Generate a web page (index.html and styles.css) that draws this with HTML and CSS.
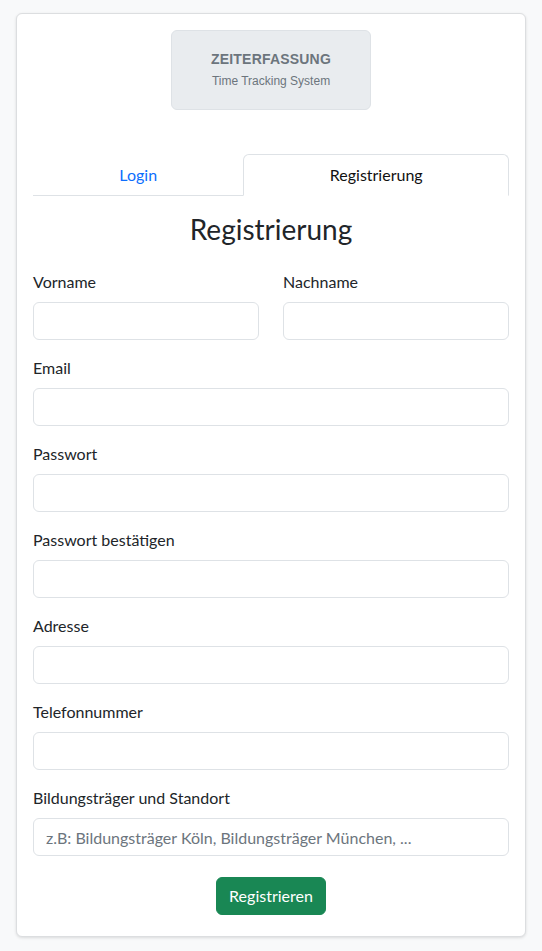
FILE: index.html
```html
<!DOCTYPE html>
<html lang="de">
<head>
<meta charset="utf-8">
<title>Zeiterfassung – Registrierung</title>
<link rel="stylesheet" href="styles.css">
</head>
<body>
<main class="page">
  <section class="card">
    <div class="logo">
      <div class="logo-title">ZEITERFASSUNG</div>
      <div class="logo-sub">Time Tracking System</div>
    </div>
    <nav class="tabs">
      <a class="tab" href="#">Login</a>
      <a class="tab active" href="#">Registrierung</a>
    </nav>
    <h3 class="heading">Registrierung</h3>
    <form class="form">
      <div class="row">
        <div class="group">
          <label class="label">Vorname</label>
          <input class="input" type="text">
        </div>
        <div class="group">
          <label class="label">Nachname</label>
          <input class="input" type="text">
        </div>
      </div>
      <div class="group">
        <label class="label">Email</label>
        <input class="input" type="email">
      </div>
      <div class="group">
        <label class="label">Passwort</label>
        <input class="input" type="password">
      </div>
      <div class="group">
        <label class="label">Passwort bestätigen</label>
        <input class="input" type="password">
      </div>
      <div class="group">
        <label class="label">Adresse</label>
        <input class="input" type="text">
      </div>
      <div class="group">
        <label class="label">Telefonnummer</label>
        <input class="input" type="text">
      </div>
      <div class="group">
        <label class="label">Bildungsträger und Standort</label>
        <input class="input" type="text" placeholder="z.B: Bildungsträger Köln, Bildungsträger München, ...">
      </div>
      <div class="actions">
        <button class="btn" type="button">Registrieren</button>
      </div>
    </form>
  </section>
</main>
</body>
</html>
```
FILE: styles.css
```css
* { box-sizing: border-box; }
html, body {
  margin: 0;
  background: #f8f9fa;
  font-family: Lato, "Noto Sans", sans-serif;
  font-size: 16px;
  line-height: 1.5;
  color: #212529;
}
.page {
  padding: 13px 16px 15px 16px;
}
.card {
  background: #fff;
  border: 1px solid #dcdee0;
  border-radius: 6px;
  box-shadow: 0 1px 3px rgba(0, 0, 0, 0.12);
  padding: 16px 16px 21px;
}
.logo {
  width: 200px;
  height: 80px;
  margin: 0 auto 44px;
  background: #e9ecef;
  border: 1px solid #dee2e6;
  border-radius: 6px;
  display: flex;
  flex-direction: column;
  align-items: center;
  justify-content: center;
  gap: 6px;
  font-family: "Liberation Sans", Arial, sans-serif;
  color: #6c757d;
}
.logo-title {
  font-size: 14px;
  font-weight: 700;
  letter-spacing: 0.2px;
  line-height: 17px;
}
.logo-sub {
  font-size: 12px;
  line-height: 15px;
}
.tabs {
  display: flex;
  border-bottom: 1px solid #dee2e6;
}
.tab {
  flex: 1 1 auto;
  text-align: center;
  padding: 8px 16px;
  margin-bottom: -1px;
  border: 1px solid transparent;
  border-top-left-radius: 6px;
  border-top-right-radius: 6px;
  color: #0d6efd;
  text-decoration: none;
  line-height: 24px;
}
.tab.active {
  color: #111;
  background: #fff;
  border-color: #dee2e6 #dee2e6 #fff;
}
.heading {
  margin: 16px 0 24px;
  text-align: center;
  font-size: 28px;
  font-weight: 400;
  line-height: 34px;
}
.form {
  display: flex;
  flex-direction: column;
}
.row {
  display: grid;
  grid-template-columns: minmax(0, 1fr) minmax(0, 1fr);
  column-gap: 24px;
}
.group {
  display: flex;
  flex-direction: column;
  min-width: 0;
  margin-bottom: 16px;
}
.label {
  line-height: 24px;
  margin-bottom: 8px;
}
.input {
  width: 100%;
  min-width: 0;
  height: 38px;
  border: 1px solid #dee2e6;
  border-radius: 6px;
  padding: 6px 12px;
  font: inherit;
  color: #212529;
  background: #fff;
}
.input::placeholder {
  color: #6c757d;
}
.actions {
  display: flex;
  justify-content: center;
  margin-top: 5px;
}
.btn {
  height: 38px;
  padding: 6px 12px;
  background: #198754;
  color: #fff;
  border: 1px solid #198754;
  border-radius: 6px;
  font: inherit;
  line-height: 24px;
}
```
